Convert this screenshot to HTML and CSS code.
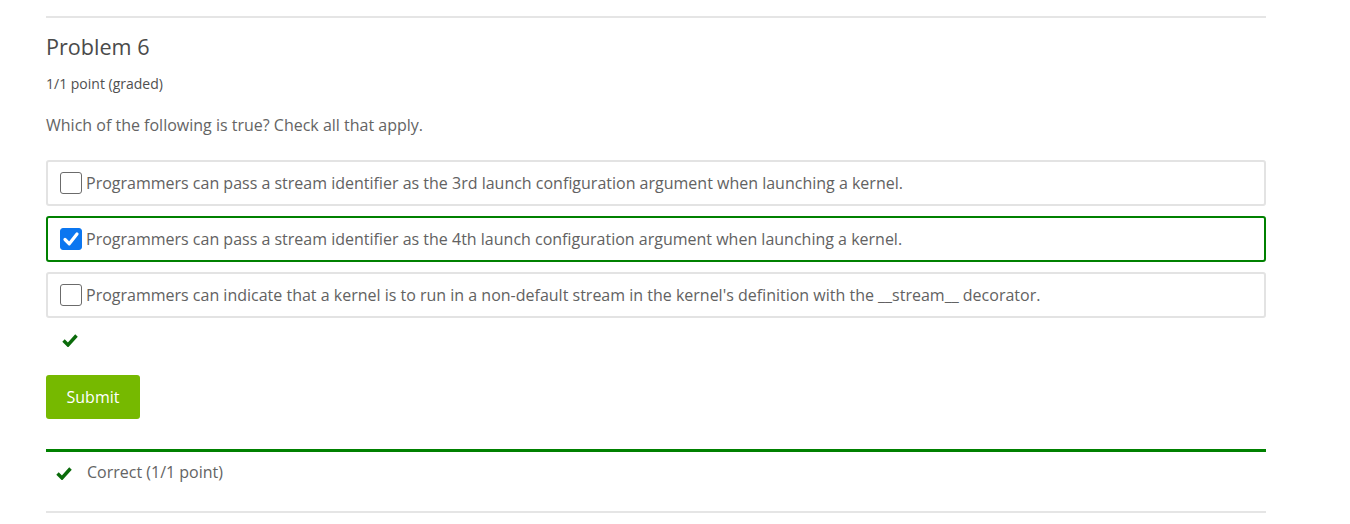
FILE: index.html
```html
<!DOCTYPE html>
<html>
<head>
<meta charset="utf-8">
<link rel="stylesheet" href="styles.css">
</head>
<body>
<div class="problem">
  <h3 class="title">Problem 6</h3>
  <div class="points">1/1 point (graded)</div>
  <p class="question">Which of the following is true? Check all that apply.</p>
  <div class="choices">
    <label class="choice">
      <span class="box"></span>
      <span class="text">Programmers can pass a stream identifier as the 3rd launch configuration argument when launching a kernel.</span>
    </label>
    <label class="choice correct">
      <span class="box checked"><svg viewBox="0 0 22 22" width="22" height="22"><path d="M5 11.5 L9.3 15.8 L17 6" fill="none" stroke="#fff" stroke-width="3.2" stroke-linecap="round" stroke-linejoin="round"/></svg></span>
      <span class="text">Programmers can pass a stream identifier as the 4th launch configuration argument when launching a kernel.</span>
    </label>
    <label class="choice">
      <span class="box"></span>
      <span class="text">Programmers can indicate that a kernel is to run in a non-default stream in the kernel's definition with the __stream__ decorator.</span>
    </label>
  </div>
  <div class="status">
    <svg class="check" viewBox="0 0 16 14" width="16" height="14"><path d="M1.5 7.5 L6 12 L14.5 2.5" fill="none" stroke="#0b6b0b" stroke-width="3.4" stroke-linejoin="miter"/></svg>
  </div>
  <button class="submit">Submit</button>
  <div class="feedback">
    <svg class="check" viewBox="0 0 16 14" width="16" height="14"><path d="M1.5 7.5 L6 12 L14.5 2.5" fill="none" stroke="#0b6b0b" stroke-width="3.4" stroke-linejoin="miter"/></svg>
    <span class="fb-text">Correct (1/1 point)</span>
  </div>
</div>
</body>
</html>
```

FILE: styles.css
```css
html, body {
  margin: 0;
  padding: 0;
  background: #fff;
}
body {
  font-family: "Open Sans", "Liberation Sans", sans-serif;
  color: #646464;
}
.problem {
  margin-left: 46px;
  width: 1220px;
  margin-top: 16px;
  border-top: 2px solid #e5e5e5;
  border-bottom: 2px solid #e5e5e5;
  box-sizing: border-box;
}
.title {
  margin: 15px 0 0 0;
  font-size: 21.6px;
  font-weight: 400;
  line-height: 28px;
  color: #4a4a4a;
}
.points {
  margin-top: 14px;
  font-size: 14px;
  line-height: 18px;
  color: #4f4f4f;
}
.question {
  margin: 21px 0 0 0;
  font-size: 16px;
  line-height: 22px;
}
.choices {
  margin-top: 24px;
  display: flex;
  flex-direction: column;
  gap: 10px;
}
.choice {
  display: flex;
  align-items: center;
  height: 46px;
  box-sizing: border-box;
  border: 2px solid #e3e3e3;
  border-radius: 3px;
  padding-left: 12px;
}
.choice.correct {
  border-color: #008100;
}
.box {
  width: 22px;
  height: 22px;
  box-sizing: border-box;
  border: 1px solid #6b6b6b;
  border-radius: 3px;
  background: #fff;
  flex: 0 0 auto;
  display: flex;
}
.box.checked {
  background: #0b76f0;
  border-color: #0b76f0;
}
.box.checked svg {
  margin: -1px;
}
.text {
  margin-left: 4px;
  font-size: 16px;
  color: #626262;
}
.status {
  height: 57px;
  padding-left: 16px;
  display: flex;
  align-items: flex-start;
  padding-top: 15px;
  box-sizing: border-box;
}
.submit {
  display: block;
  width: 94px;
  height: 44px;
  background: #76b900;
  border: none;
  border-radius: 3px;
  color: #fff;
  font-family: "Open Sans", "Liberation Sans", sans-serif;
  font-size: 16px;
  padding: 0;
}
.feedback {
  margin-top: 30px;
  border-top: 3px solid #008100;
  height: 62px;
  display: flex;
  align-items: flex-start;
  padding-top: 9px;
  padding-left: 10px;
  box-sizing: border-box;
}
.feedback .check {
  margin-top: 5px;
}
.fb-text {
  margin-left: 15px;
  font-size: 16px;
  line-height: 22px;
  color: #646464;
}
```
